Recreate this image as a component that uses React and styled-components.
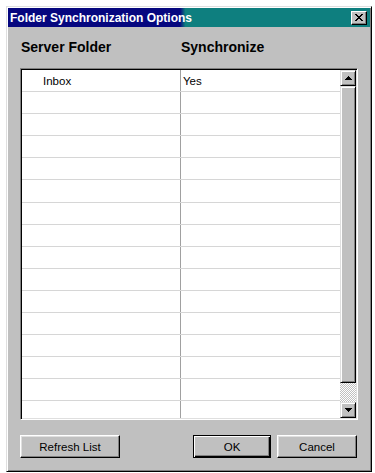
import React from 'react'
import styled, { createGlobalStyle } from 'styled-components'

const GlobalStyle = createGlobalStyle`
  html, body {
    margin: 0;
    padding: 0;
    background: #ffffff;
  }
  body {
    padding: 6px 3px 0 6px;
    font-family: "Liberation Sans", Arial, sans-serif;
  }
`

const folders = [{ name: 'Inbox', sync: 'Yes' }]
const ROW_COUNT = 16

function App() {
  const rows = []
  for (let i = 0; i < ROW_COUNT; i++) {
    rows.push(folders[i] || { name: '', sync: '' })
  }

  return (
    <>
      <GlobalStyle />
      <Window>
        <TitleBar>
          <Title>Folder Synchronization Options</Title>
          <CloseButton>
            <svg width="8" height="7" viewBox="0 0 8 7">
              <path d="M0 0h2v1h1v1h2V1h1V0h2v1H7v1H6v1H5v1h1v1h1v1h1v1H6V6H5V5H3v1H2v1H0V6h1V5h1V4h1V3H2V2H1V1H0z" fill="#000" />
            </svg>
          </CloseButton>
        </TitleBar>
        <Body>
          <HeaderRow>
            <HeaderCell width={160}>Server Folder</HeaderCell>
            <HeaderCell>Synchronize</HeaderCell>
          </HeaderRow>
          <ListBox>
            <Rows>
              {rows.map((r, i) => (
                <Row key={i}>
                  <NameCell>{r.name}</NameCell>
                  <SyncCell>{r.sync}</SyncCell>
                </Row>
              ))}
            </Rows>
            <ScrollBar>
              <ScrollButton>
                <svg width="7" height="4" viewBox="0 0 7 4">
                  <path d="M3 0h1v1h1v1h1v1h1v1H0V3h1V2h1V1h1z" fill="#000" />
                </svg>
              </ScrollButton>
              <Track>
                <Thumb />
              </Track>
              <ScrollButton>
                <svg width="7" height="4" viewBox="0 0 7 4">
                  <path d="M0 0h7v1H6v1H5v1H4v1H3V3H2V2H1V1H0z" fill="#000" />
                </svg>
              </ScrollButton>
            </ScrollBar>
          </ListBox>
          <Footer>
            <Button width={100}>Refresh List</Button>
            <ButtonGroup>
              <Button width={78} primary>OK</Button>
              <Button width={80}>Cancel</Button>
            </ButtonGroup>
          </Footer>
        </Body>
      </Window>
    </>
  )
}

export default App

const Window = styled.div`
  width: 366px;
  height: 466px;
  box-sizing: border-box;
  background: #c0c0c0;
  border-top: 1px solid #dfdfdf;
  border-left: 1px solid #dfdfdf;
  border-right: 1px solid #000;
  border-bottom: 1px solid #000;
  box-shadow: inset 1px 1px 0 #fff, inset -1px -1px 0 #808080;
  padding: 1px;
  display: flex;
  flex-direction: column;
`

const TitleBar = styled.div`
  height: 19px;
  flex: none;
  display: flex;
  align-items: center;
  justify-content: space-between;
  padding: 0 3px 0 2px;
  background: linear-gradient(90deg, #06077f 0%, #06077f 47.5%, #0e7f7f 49%, #0e7f7f 100%);
`

const Title = styled.span`
  color: #fff;
  font-weight: bold;
  font-size: 12px;
`

const CloseButton = styled.div`
  width: 16px;
  height: 14px;
  box-sizing: border-box;
  background: #c0c0c0;
  border-top: 1px solid #fff;
  border-left: 1px solid #fff;
  border-right: 1px solid #000;
  border-bottom: 1px solid #000;
  box-shadow: inset -1px -1px 0 #808080;
  display: flex;
  align-items: center;
  justify-content: center;
  padding-right: 1px;
`

const Body = styled.div`
  flex: 1;
  display: flex;
  flex-direction: column;
  padding: 0 12px 12px 12px;
`

const HeaderRow = styled.div`
  height: 41px;
  display: flex;
  align-items: center;
  padding: 0 0 2px 1px;
  box-sizing: border-box;
`

const HeaderCell = styled.div`
  width: ${(p) => (p.width ? `${p.width}px` : 'auto')};
  font-size: 14px;
  font-weight: bold;
  color: #000;
`

const ListBox = styled.div`
  height: 352px;
  box-sizing: border-box;
  display: flex;
  background: #fff;
  border-top: 1px solid #808080;
  border-left: 1px solid #808080;
  border-right: 1px solid #fff;
  border-bottom: 1px solid #fff;
  box-shadow: inset 1px 1px 0 #000, inset -1px -1px 0 #dfdfdf;
  padding: 1px;
`

const Rows = styled.div`
  flex: 1;
  overflow: hidden;
`

const Row = styled.div`
  height: 22.1px;
  box-sizing: border-box;
  display: flex;
  border-bottom: 1px solid #d6d6d6;
  font-size: 11.5px;
  color: #000;
`

const NameCell = styled.div`
  width: 159px;
  flex: none;
  border-right: 1px solid #a0a0a0;
  padding: 5px 0 0 21px;
  box-sizing: border-box;
`

const SyncCell = styled.div`
  flex: 1;
  padding: 5px 0 0 2px;
`

const ScrollBar = styled.div`
  width: 16px;
  flex: none;
  display: flex;
  flex-direction: column;
`

const ScrollButton = styled.div`
  width: 16px;
  height: 16px;
  flex: none;
  box-sizing: border-box;
  background: #c0c0c0;
  border-top: 1px solid #dfdfdf;
  border-left: 1px solid #dfdfdf;
  border-right: 1px solid #000;
  border-bottom: 1px solid #000;
  box-shadow: inset 1px 1px 0 #fff, inset -1px -1px 0 #808080;
  display: flex;
  align-items: center;
  justify-content: center;
`

const Track = styled.div`
  flex: 1;
  display: flex;
  flex-direction: column;
  background-color: #e0e0e0;
  background-image: repeating-conic-gradient(#c0c0c0 0 25%, #ffffff 0 50%);
  background-size: 2px 2px;
`

const Thumb = styled.div`
  height: 297px;
  box-sizing: border-box;
  background: #c0c0c0;
  border-top: 1px solid #dfdfdf;
  border-left: 1px solid #dfdfdf;
  border-right: 1px solid #000;
  border-bottom: 1px solid #000;
  box-shadow: inset 1px 1px 0 #fff, inset -1px -1px 0 #808080;
`

const Footer = styled.div`
  margin-top: 15px;
  display: flex;
  justify-content: space-between;
  align-items: center;
`

const ButtonGroup = styled.div`
  display: flex;
  gap: 6px;
  padding-right: 1px;
`

const Button = styled.div`
  width: ${(p) => p.width}px;
  height: 23px;
  box-sizing: border-box;
  background: #c0c0c0;
  border: 1px solid #000;
  border-top-color: ${(p) => (p.primary ? '#000' : '#fff')};
  border-left-color: ${(p) => (p.primary ? '#000' : '#fff')};
  box-shadow: ${(p) =>
    p.primary
      ? 'inset 1px 1px 0 #fff, inset -1px -1px 0 #000, inset -2px -2px 0 #808080'
      : 'inset -1px -1px 0 #808080, inset 1px 1px 0 #dfdfdf'};
  display: flex;
  align-items: center;
  justify-content: center;
  font-size: 11.5px;
  color: #000;
`
